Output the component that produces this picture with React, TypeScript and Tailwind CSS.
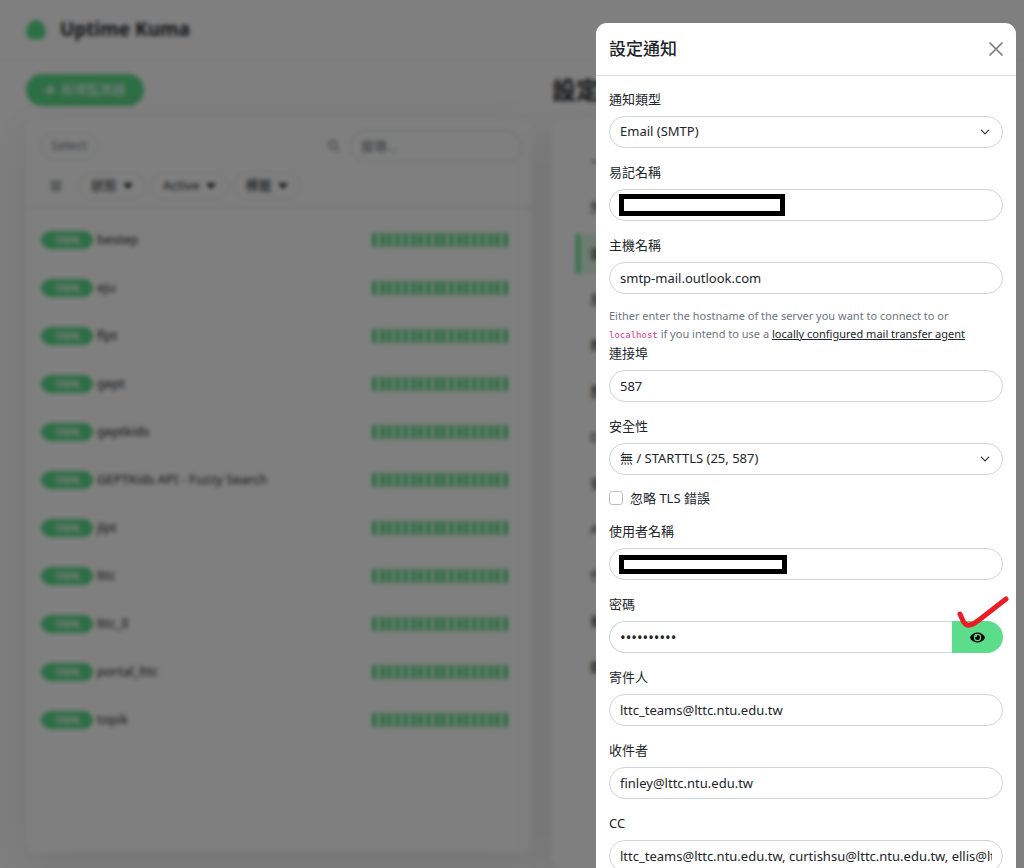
import React, { useState } from 'react';
import { FaBars, FaEye, FaPlus, FaSearch } from 'react-icons/fa';

const monitors = [
  'bestep',
  'eju',
  'flpt',
  'gept',
  'geptkids',
  'GEPTKids API - Fuzzy Search',
  'jlpt',
  'lttc',
  'lttc_ll',
  'portal_lttc',
  'topik',
];

const settingsMenu = [
  '一般',
  '外觀',
  '通知',
  '反向代理',
  '標籤',
  '歷史',
  'Docker',
  '安全',
  'API',
  '代理',
  '備份',
  '關於',
];

const filters = ['狀態', 'Active', '標籤'];

const inputClass =
  'h-8 w-full rounded-full border border-[#ced4da] bg-white px-[10px] text-[13px] text-[#212529] outline-none focus:border-[#5cdd8b]';

const Logo: React.FC = () => (
  <svg viewBox="0 0 24 24" className="h-6 w-6" aria-hidden="true">
    <path
      d="M12 2C8.500 2 5.500 4 4 7.500C2.500 11 1.500 15 3 18C4.500 21 8 21.500 12 21.500S19.500 21 21 18C22.500 15 21.500 11 20 7.500C18.500 4 15.500 2 12 2Z"
      fill="#5cdd8b"
    />
  </svg>
);

const Caret: React.FC = () => (
  <svg viewBox="0 0 10 6" className="h-[6px] w-[10px]" aria-hidden="true">
    <path d="M0 0H10L5 6Z" fill="#212529" />
  </svg>
);

const MonitorRow: React.FC<{ name: string }> = ({ name }) => (
  <li className="flex h-12 items-center justify-between pl-[15px] pr-6">
    <div className="flex items-center gap-1">
      <span className="w-[52px] rounded-full bg-[#5cdd8b] text-center text-[10px] leading-[18px] font-semibold text-white">100%</span>
      <span>{name}</span>
    </div>
    <div className="flex w-[136px] justify-between">
      {Array.from({ length: 18 }).map((_, i) => (
        <span key={i} className="h-[14px] w-[5px] bg-[#5cdd8b]" />
      ))}
    </div>
  </li>
);

const Dashboard: React.FC = () => (
  <div className="flex min-h-screen flex-col">
    <header className="flex h-[60px] items-center gap-3 border-b border-[#e9ecef] pl-6">
      <Logo />
      <h1 className="text-[19px] font-bold">Uptime Kuma</h1>
    </header>

    <div className="flex flex-1 gap-5 pt-[14px] pl-[26px]">
      <div className="flex w-[506px] shrink-0 flex-col pb-4">
        <button type="button" className="flex h-8 w-[118px] items-center justify-center gap-1 rounded-full bg-[#5cdd8b] text-white">
          <FaPlus className="h-3 w-3" />
          新增監測器
        </button>
        <section className="mt-[13px] flex-1 rounded-[10px] bg-white shadow-[0_12px_50px_rgba(0,0,0,0.10)]">
          <div className="flex items-center justify-between px-[10px] pt-[11px]">
            <button type="button" className="ml-1 h-7 rounded-full border border-[#dee2e6] px-[10px] text-[#6c757d]">Select</button>
            <div className="flex items-center gap-[10px]">
              <FaSearch className="h-3 w-3 text-[#a0a4a8]" />
              <input type="search" aria-label="搜尋" placeholder="搜尋..." className="h-8 w-[172px] rounded-full border border-[#ced4da] px-[10px] placeholder:text-[#6c757d]" />
            </div>
          </div>
          <div className="flex items-center gap-1 border-b border-[#dee2e6] pt-[10px] pb-[7px] pl-6">
            <FaBars className="mr-3 h-3 w-3 text-[#495057]" />
            {filters.map((filter) => (
              <button key={filter} type="button" className="flex h-7 items-center gap-[6px] rounded-full border border-[#dee2e6] px-3">
                {filter}
                <Caret />
              </button>
            ))}
          </div>
          <ul className="pt-2">
            {monitors.map((name) => (
              <MonitorRow key={name} name={name} />
            ))}
          </ul>
        </section>
      </div>

      <main className="flex min-w-0 flex-1 flex-col">
        <h2 className="text-[24px] leading-[32px] font-semibold">設定</h2>
        <section className="mt-[13px] flex flex-1 rounded-l-[10px] bg-white pt-[23px] pl-6 shadow-[0_12px_50px_rgba(0,0,0,0.10)]">
          <nav className="flex w-[130px] shrink-0 flex-col gap-[6px]">
            {settingsMenu.map((item) => (
              <a
                key={item}
                href="#settings"
                className={
                  item === '通知'
                    ? 'flex h-10 items-center border-l-4 border-[#5cdd8b] bg-[#dcf8e7] pl-[10px]'
                    : 'flex h-10 items-center pl-[14px]'
                }
              >
                {item}
              </a>
            ))}
          </nav>
        </section>
      </main>
    </div>
  </div>
);

interface FieldProps {
  id: string;
  label: string;
  children: React.ReactNode;
}

const Field: React.FC<FieldProps> = ({ id, label, children }) => (
  <div className="flex flex-col">
    <label htmlFor={id} className="mb-[7px] leading-5">{label}</label>
    {children}
  </div>
);

const SelectBox: React.FC<{ id: string; option: string }> = ({ id, option }) => (
  <div className="grid items-center">
    <select id={id} className={`col-start-1 row-start-1 appearance-none ${inputClass}`}>
      <option>{option}</option>
    </select>
    <svg viewBox="0 0 16 16" className="pointer-events-none col-start-1 row-start-1 mr-[13px] h-[10px] w-[10px] justify-self-end" aria-hidden="true">
      <path d="M2 5l6 6 6-6" fill="none" stroke="#343a40" strokeWidth="2" strokeLinecap="round" strokeLinejoin="round" />
    </svg>
  </div>
);

// Input whose value is covered by an outlined box
const MaskedInput: React.FC<{ id: string; boxClass: string }> = ({ id, boxClass }) => (
  <div className="grid items-center">
    <input id={id} type="text" className={`col-start-1 row-start-1 ${inputClass}`} />
    <span className={`pointer-events-none z-10 col-start-1 row-start-1 ml-[10px] border-black bg-white ${boxClass}`} />
  </div>
);

const NotificationDialog: React.FC = () => {
  const [showPassword, setShowPassword] = useState(false);

  return (
    <div role="dialog" aria-labelledby="dialog-title" className="h-fit w-full max-w-[420px] rounded-[11px] bg-white">
      <div className="flex h-[53px] items-center justify-between border-b border-[#dee2e6] px-[13px]">
        <h5 id="dialog-title" className="text-[17px] font-medium">設定通知</h5>
        <button type="button" aria-label="Close" className="text-[#7a7a7a]">
          <svg viewBox="0 0 14 14" className="h-[14px] w-[14px]" aria-hidden="true">
            <path d="M1 1L13 13M13 1L1 13" fill="none" stroke="currentColor" strokeWidth="1.700" strokeLinecap="round" />
          </svg>
        </button>
      </div>

      <form className="flex flex-col gap-[14px] px-[13px] pt-[13px] pb-6">
        <Field id="type" label="通知類型">
          <SelectBox id="type" option="Email (SMTP)" />
        </Field>
        <Field id="name" label="易記名稱">
          <MaskedInput id="name" boxClass="h-[22px] w-[166px] border-[5px]" />
        </Field>
        <div>
          <Field id="hostname" label="主機名稱">
            <input id="hostname" type="text" defaultValue="smtp-mail.outlook.com" className={inputClass} />
          </Field>
          <p className="mt-[13px] pr-2 text-[11px] leading-[18px] text-[#6c757d]">
            Either enter the hostname of the server you want to connect to or{' '}
            <code className="font-['DejaVu_Sans_Mono',monospace] text-[9px] leading-none text-[#d63384]">localhost</code> if you intend to use a{' '}
            <a href="#mta" className="text-[#212529] underline">locally configured mail transfer agent</a>
          </p>
          <Field id="port" label="連接埠">
            <input id="port" type="text" inputMode="numeric" defaultValue="587" className={inputClass} />
          </Field>
        </div>
        <Field id="secure" label="安全性">
          <SelectBox id="secure" option="無 / STARTTLS (25, 587)" />
        </Field>
        <div className="flex items-center gap-[7px] leading-[18px]">
          <input id="ignore-tls" type="checkbox" className="h-[14px] w-[14px] appearance-none rounded-[3px] border border-[#bfbfbf] checked:bg-[#5cdd8b]" />
          <label htmlFor="ignore-tls">忽略 TLS 錯誤</label>
        </div>
        <Field id="username" label="使用者名稱">
          <MaskedInput id="username" boxClass="h-[19px] w-[168px] border-[5px]" />
        </Field>
        <Field id="password" label="密碼">
          <div className="relative flex">
            <input
              id="password"
              type={showPassword ? 'text' : 'password'}
              defaultValue="abcdefghij"
              className="h-8 min-w-0 flex-1 rounded-l-full border border-r-0 border-[#ced4da] px-[10px] text-[15px] outline-none"
            />
            <button
              type="button"
              aria-label="Show password"
              onClick={() => setShowPassword(!showPassword)}
              className="flex h-8 w-[51px] items-center justify-center rounded-r-full bg-[#5cdd8b] text-black"
            >
              <FaEye className="h-[15px] w-[15px]" />
            </button>
            <svg viewBox="0 0 52 32" className="pointer-events-none absolute -top-[25px] -right-[6px] h-8 w-[52px]" aria-hidden="true">
              <path d="M3 18C5 22 6 28 10 29C14 30 18 27 22 24L49 3" fill="none" stroke="#ed1c24" strokeWidth="5" strokeLinecap="round" strokeLinejoin="round" />
            </svg>
          </div>
        </Field>
        <Field id="from" label="寄件人">
          <input id="from" type="text" defaultValue="lttc_teams@lttc.ntu.edu.tw" className={inputClass} />
        </Field>
        <Field id="to" label="收件者">
          <input id="to" type="text" defaultValue="finley@lttc.ntu.edu.tw" className={inputClass} />
        </Field>
        <Field id="cc" label="CC">
          <input id="cc" type="text" defaultValue="lttc_teams@lttc.ntu.edu.tw, curtishsu@lttc.ntu.edu.tw, ellis@lttc.ntu.edu.tw" className={inputClass} />
        </Field>
      </form>
    </div>
  );
};

const App: React.FC = () => (
  <div className="h-screen overflow-hidden bg-white font-['Noto_Sans','Noto_Sans_CJK_TC',sans-serif] text-[13px] text-[#212529]">
    <Dashboard />
    <div className="fixed inset-0 flex justify-end overflow-y-auto bg-black/50 pt-[23px] pr-2 backdrop-blur-[2px] [scrollbar-width:none]">
      <NotificationDialog />
    </div>
  </div>
);

export default App;
